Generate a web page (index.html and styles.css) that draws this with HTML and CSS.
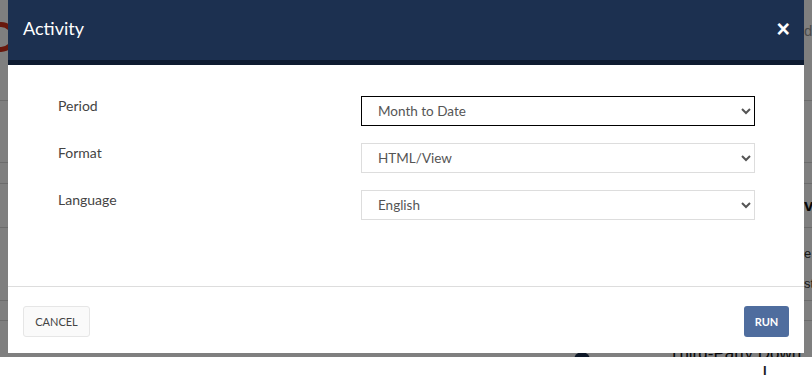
FILE: index.html
```html
<!DOCTYPE html>
<html lang="en">
<head>
    <meta charset="UTF-8">
    <meta name="viewport" content="width=device-width, initial-scale=1.0">
    <title>Activity</title>
    <link rel="stylesheet" href="styles.css">
</head>
<body>
    <div class="screen">
        <div class="page">
            <div class="page-logo"></div>
            <div class="page-line l1"></div>
            <div class="page-line l2"></div>
            <div class="page-line l3"></div>
            <div class="page-line l4"></div>
            <div class="page-line l5"></div>
            <div class="page-line l6"></div>
            <span class="page-frag f1">d</span>
            <span class="page-frag f2">ve</span>
            <span class="page-frag f3">e</span>
            <span class="page-frag f4">st</span>
            <span class="page-dot"></span>
            <span class="page-title">Third-Party Down</span>
        </div>

        <div class="overlay">
            <div class="modal">
                <div class="modal-header">
                    <h1>Activity</h1>
                    <button type="button" class="close">&times;</button>
                </div>

                <div class="modal-body">
                    <div class="field">
                        <label for="period">Period</label>
                        <select id="period" class="focused">
                            <option>Month to Date</option>
                        </select>
                    </div>
                    <div class="field">
                        <label for="format">Format</label>
                        <select id="format">
                            <option>HTML/View</option>
                        </select>
                    </div>
                    <div class="field">
                        <label for="language">Language</label>
                        <select id="language">
                            <option>English</option>
                        </select>
                    </div>
                </div>

                <div class="modal-footer">
                    <button type="button" class="btn btn-cancel">CANCEL</button>
                    <button type="button" class="btn btn-run">RUN</button>
                </div>
            </div>
        </div>
    </div>
    <div class="below">
        <span class="cursor">I</span>
    </div>
</body>
</html>
```

FILE: styles.css
```css
body {
    margin: 0;
    background-color: #ffffff;
    font-family: 'Lato', 'Open Sans', sans-serif;
}

.screen {
    position: relative;
    height: 357px;
    overflow: hidden;
}

/* page behind the dialog */
.page {
    height: 357px;
    position: relative;
    background-color: #ffffff;
}

.page-logo {
    position: absolute;
    left: -14px;
    top: 22px;
    width: 20px;
    height: 20px;
    border: 5px solid #d0311b;
    border-radius: 50%;
}

.page-line {
    position: absolute;
    left: 0;
    right: 0;
    height: 1px;
    background-color: #d8d8d8;
}

.l1 { top: 100px; }
.l2 { top: 162px; }
.l3 { top: 183px; }
.l4 { top: 227px; }
.l5 { top: 300px; }
.l6 { top: 320px; }

.page-frag {
    position: absolute;
    left: 804px;
    font-family: 'Liberation Sans', sans-serif;
    font-size: 15px;
    color: #333;
}

.f1 { top: 22px; color: #999; }
.f2 { top: 196px; font-weight: bold; font-size: 17px; color: #111; }
.f3 { top: 246px; font-size: 13px; }
.f4 { top: 276px; font-size: 13px; }

.page-dot {
    position: absolute;
    left: 574px;
    top: 352px;
    width: 16px;
    height: 16px;
    border-radius: 50%;
    background-color: #1c3050;
}

.page-title {
    position: absolute;
    left: 669px;
    top: 344px;
    height: 13px;
    overflow: hidden;
    font-family: 'Liberation Sans', sans-serif;
    font-size: 17px;
    line-height: 20px;
    color: #111;
    white-space: nowrap;
}

.overlay {
    position: absolute;
    top: 0;
    left: 0;
    right: 0;
    bottom: 0;
    background-color: rgba(0, 0, 0, 0.5);
}

.modal {
    margin: 0 8px;
    height: 353px;
    background-color: #ffffff;
    display: flex;
    flex-direction: column;
}

.modal-header {
    height: 60px;
    background-color: #1c3050;
    border-bottom: 5px solid #0e1b30;
    display: flex;
    align-items: center;
    justify-content: space-between;
    padding: 0 14px 0 15px;
}

.modal-header h1 {
    margin: 0 0 4px 0;
    color: #ffffff;
    font-size: 18px;
    font-weight: normal;
}

.close {
    background: none;
    border: none;
    color: #ffffff;
    font-family: 'Liberation Sans', sans-serif;
    font-size: 23px;
    font-weight: bold;
    line-height: 1;
    padding: 0;
    margin-bottom: 2px;
    cursor: pointer;
}

.modal-body {
    flex: 1;
    padding: 31px 49px 0 50px;
    border-bottom: 1px solid #dddddd;
}

.field {
    display: flex;
    align-items: center;
    margin-bottom: 17px;
}

.field label {
    width: 303px;
    font-size: 14px;
    color: #444444;
    margin-top: -12px;
}

.field select {
    width: 394px;
    height: 30px;
    padding: 0 8px 0 12px;
    border: 1px solid #dddddd;
    border-radius: 0;
    background-color: #ffffff;
    font-family: 'Lato', sans-serif;
    font-size: 13.5px;
    color: #555555;
}

.field select.focused {
    border-color: #000000;
}

.modal-footer {
    height: 66px;
    display: flex;
    align-items: center;
    justify-content: space-between;
    padding: 3px 15px 0 15px;
    box-sizing: border-box;
}

.btn {
    height: 31px;
    font-family: 'Lato', sans-serif;
    font-size: 11px;
    border-radius: 3px;
    cursor: pointer;
}

.btn-cancel {
    width: 67px;
    background-color: #fafafa;
    border: 1px solid #e6e6e6;
    color: #444444;
}

.btn-run {
    width: 45px;
    background-color: #4f6d9e;
    border: none;
    color: #ffffff;
    font-weight: bold;
}

.below {
    height: 19px;
    position: relative;
}

.cursor {
    position: absolute;
    left: 763px;
    top: 8px;
    font-family: 'Liberation Sans', sans-serif;
    font-size: 13px;
    line-height: 11px;
    font-weight: bold;
    color: #222;
}
```
